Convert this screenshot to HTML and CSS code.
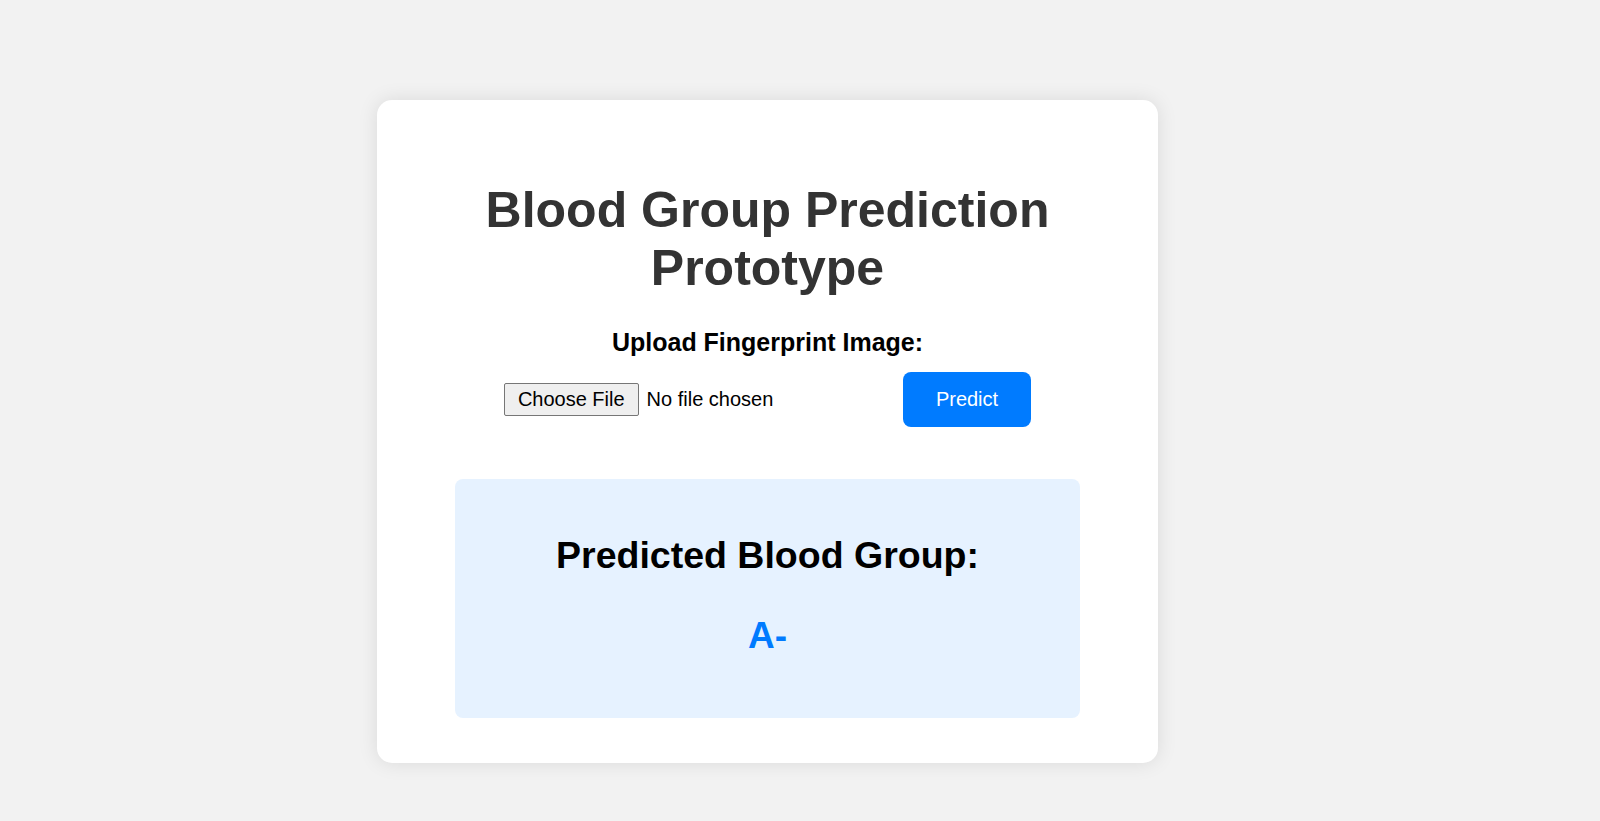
FILE: index.html
```html
<!DOCTYPE html>
<html lang="en">
<head>
<meta charset="utf-8">
<title>Blood Group Prediction Prototype</title>
<link rel="stylesheet" href="styles.css">
</head>
<body>
  <main class="card">
    <h1 class="title">Blood Group Prediction Prototype</h1>
    <form class="upload-form">
      <label class="upload-label" for="fingerprint">Upload Fingerprint Image:</label>
      <div class="upload-row">
        <input class="file-input" type="file" id="fingerprint" name="fingerprint">
        <button class="predict-btn" type="button">Predict</button>
      </div>
    </form>
    <section class="result">
      <h2 class="result-heading">Predicted Blood Group:</h2>
      <p class="result-value">A-</p>
    </section>
  </main>
</body>
</html>
```
FILE: styles.css
```css
html, body {
  margin: 0;
  padding: 0;
}

body {
  background: #f2f2f2;
  font-family: "Liberation Sans", Arial, sans-serif;
  min-height: 821px;
  padding-top: 100px;
  box-sizing: border-box;
}

.card {
  box-sizing: border-box;
  width: 781px;
  margin-left: 377px;
  padding: 81px 78px 45px;
  background: #ffffff;
  border-radius: 15px;
  box-shadow: 0 0 20px rgba(0, 0, 0, 0.1);
}

.title {
  margin: 0;
  font-size: 50px;
  font-weight: bold;
  color: #333333;
  text-align: center;
  line-height: normal;
}

.upload-form {
  margin-top: 31px;
}

.upload-label {
  display: block;
  font-size: 25px;
  font-weight: bold;
  color: #000000;
  text-align: center;
}

.upload-row {
  margin-top: 15px;
  display: flex;
  align-items: center;
  justify-content: center;
  gap: 20px;
}

.file-input {
  font-family: "Liberation Sans", Arial, sans-serif;
  font-size: 20px;
  color: #000000;
}

.file-input::file-selector-button {
  font: inherit;
  padding: 4px 13px;
  margin-right: 8px;
  border: 1px solid #767676;
  border-radius: 2px;
  background: #efefef;
  color: #000000;
}

.predict-btn {
  font-family: "Liberation Sans", Arial, sans-serif;
  font-size: 20px;
  padding: 16px 33px;
  border: none;
  border-radius: 8px;
  background: #007bff;
  color: #ffffff;
  cursor: pointer;
}

.result {
  margin-top: 52px;
  padding: 55px 20px 61px;
  background: #e6f2ff;
  border-radius: 8px;
  text-align: center;
}

.result-heading {
  margin: 0;
  font-size: 37.5px;
  font-weight: bold;
  color: #000000;
}

.result-value {
  margin: 38px 0 0;
  font-size: 37px;
  font-weight: bold;
  color: #007bff;
}
```
